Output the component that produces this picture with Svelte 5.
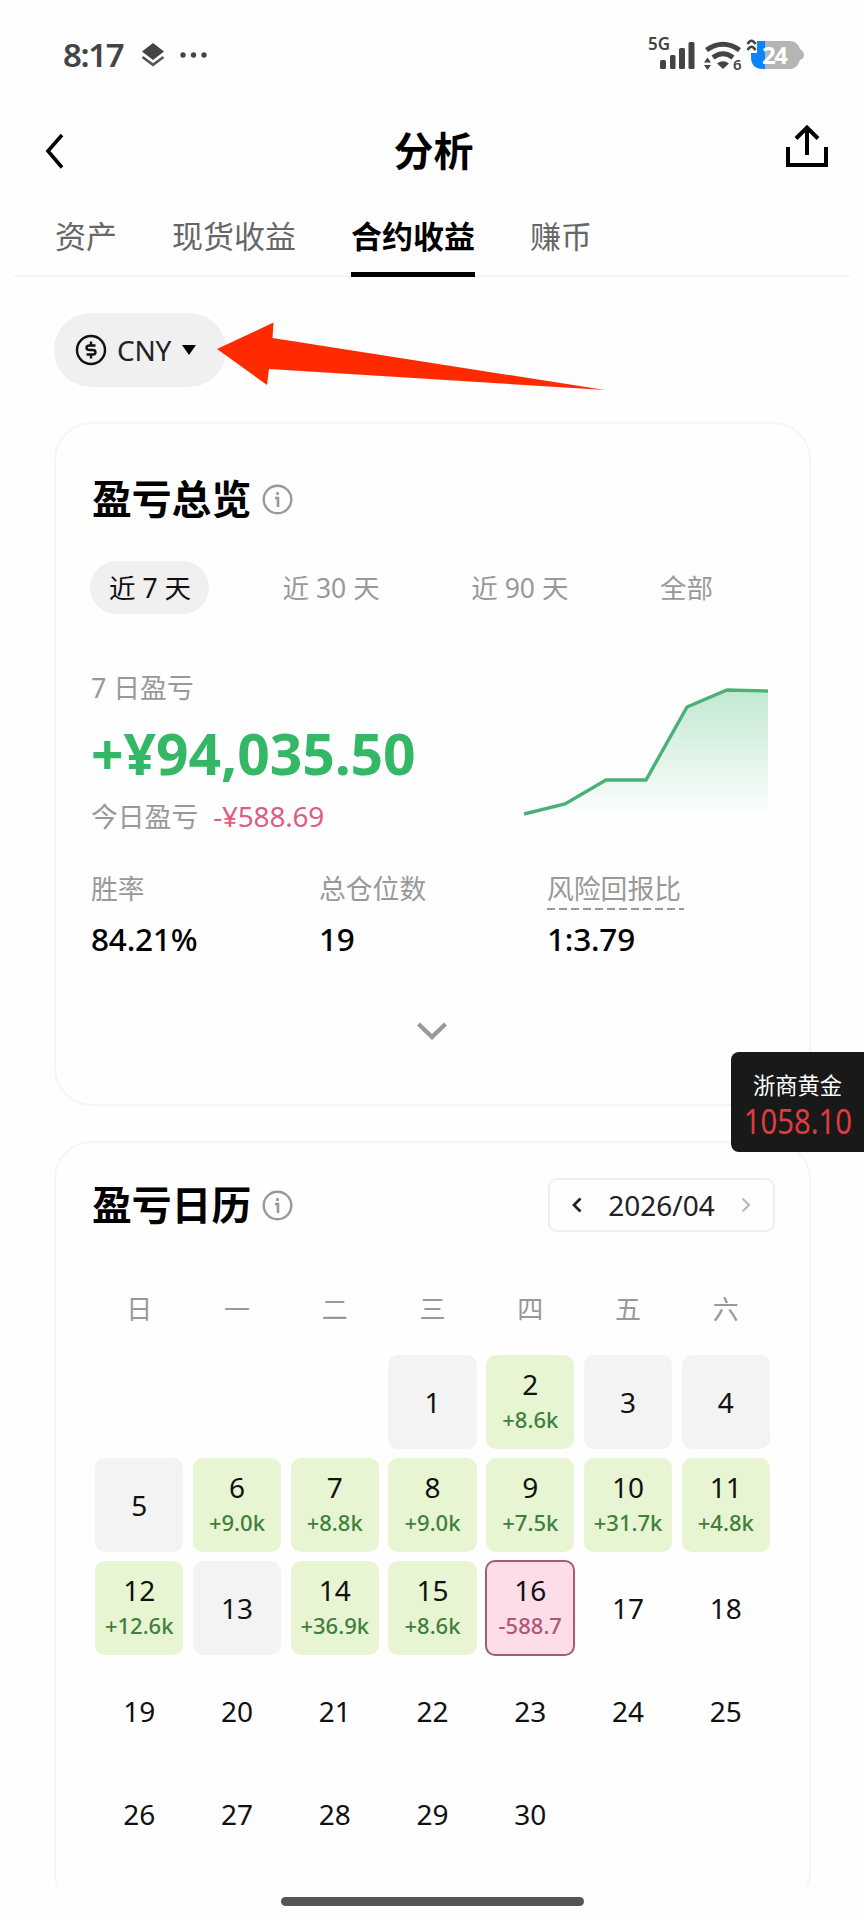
<script>
  let tabs = ['资产', '现货收益', '合约收益', '赚币'];
  let activeTab = '合约收益';

  let ranges = ['近 7 天', '近 30 天', '近 90 天', '全部'];
  let activeRange = '近 7 天';

  let weekdays = ['日', '一', '二', '三', '四', '五', '六'];
  let today = 16;
  let firstWeekday = 3; // April starts on a Wednesday
  let pnl = {
    2: '+8.6k',
    6: '+9.0k',
    7: '+8.8k',
    8: '+9.0k',
    9: '+7.5k',
    10: '+31.7k',
    11: '+4.8k',
    12: '+12.6k',
    14: '+36.9k',
    15: '+8.6k',
    16: '-588.7'
  };

  let blanks = Array.from({ length: firstWeekday });
  let days = Array.from({ length: 30 }, (_, i) => i + 1);

  function dayClass(day) {
    if (day > today) return '';
    if (!pnl[day]) return 'flat';
    return pnl[day].startsWith('-') ? 'loss' : 'gain';
  }
</script>

<div class="screen">
  <div class="status">
    <span class="time">8:17</span>
    <svg class="layers" width="24" height="26" viewBox="0 0 24 26">
      <path d="M12 1 L23 9.5 L12 18 L1 9.5 Z" fill="#444" />
      <path d="M1.5 15 L12 22.8 L22.5 15" fill="none" stroke="#555" stroke-width="2.6" />
    </svg>
    <svg class="dots" width="28" height="6" viewBox="0 0 28 6" fill="#444">
      <circle cx="3" cy="3" r="2.7" /><circle cx="13.5" cy="3" r="2.7" /><circle cx="24" cy="3" r="2.7" />
    </svg>
    <svg class="signals" width="164" height="52" viewBox="-4 -8 164 52" fill="#444">
      <text x="0" y="15" class="net">5G</text>
      <rect x="12" y="25" width="6" height="9" rx="1.5" />
      <rect x="22" y="20" width="5.5" height="14" rx="1.5" />
      <rect x="31" y="13" width="6" height="21" rx="1.5" />
      <rect x="40.5" y="7" width="6" height="27" rx="1.5" />
      <g fill="none" stroke="#444" stroke-width="5">
        <path d="M58.5 15 Q75 3.5 91.500 15" />
        <path d="M65 22.500 Q75 15 85 22.500" />
      </g>
      <path d="M69 28.500 Q75 24 81 28.500 L75 34 Z" />
      <path d="M59.500 22.500 L63 27.500 H56 Z M56 30 H63 L59.500 35 Z" />
      <text x="85" y="35" class="wifi6">6</text>
      <path d="M117 6 H142 Q149 6 152 14 Q156 16 156 20 Q156 24 152 25 Q149 34 142 34 H117 Z" fill="#b5b5b5" />
      <path d="M109 6 H117 V34 H115 Q103 34 103 22 V18 H109 Z" fill="#0a84ff" />
      <path d="M99.500 9 Q103.500 2.500 107.500 9 M99.500 15 Q103.500 8.500 107.500 15" fill="none" stroke="#444" stroke-width="2.600" />
      <text x="114" y="28.500" class="level">24</text>
    </svg>
  </div>

  <header>
    <svg width="20" height="38" viewBox="0 0 20 38">
      <path d="M17 3 L3 19 L17 35.500" fill="none" stroke="#000" stroke-width="3.600" />
    </svg>
    <h1>分析</h1>
    <svg width="42" height="44" viewBox="0 0 42 44" fill="none" stroke="#000" stroke-width="4">
      <path d="M2 23 V41 H40 V23" />
      <path d="M21 31 V3.500 M10 14.500 L21 3.500 L32 14.500" />
    </svg>
  </header>

  <nav>
    {#each tabs as tab}
      <button class="tab" class:active={tab === activeTab} on:click={() => (activeTab = tab)}>{tab}</button>
    {/each}
  </nav>

  <main>
    <div class="currency-row">
      <button class="currency">
        <svg width="32" height="32" viewBox="0 0 32 32" fill="none" stroke="#111" stroke-width="2.4">
          <circle cx="16" cy="16" r="14" />
          <path d="M20.500 11.500 H14.500 Q11.500 11.500 11.500 13.800 Q11.500 16 14.500 16 H17.500 Q20.500 16 20.500 18.200 Q20.500 20.500 17.500 20.500 H11.500 M16 7.500 V11.500 M16 20.500 V24.500" />
        </svg>
        <span>CNY</span>
        <svg width="14" height="10" viewBox="0 0 14 10"><path d="M0 0 H14 L7 10 Z" fill="#000" /></svg>
      </button>
      <svg class="pointer" width="390" height="70" viewBox="0 0 390 70">
        <path d="M0 29 L56.500 2.500 L55.500 18 L388 70 L52 49 L50 65 Z" fill="#ff2a00" />
      </svg>
    </div>

    <section class="card overview">
      <h2>
        盈亏总览
        <svg width="31" height="31" viewBox="0 0 31 31">
          <circle cx="15.500" cy="15.500" r="13.800" fill="none" stroke="#999" stroke-width="2.400" />
          <path d="M13 14 H16 V23 M15.500 8 V11" fill="none" stroke="#999" stroke-width="2.600" />
        </svg>
      </h2>

      <div class="ranges">
        {#each ranges as range}
          <button class="range" class:active={range === activeRange} on:click={() => (activeRange = range)}>{range}</button>
        {/each}
      </div>

      <div class="summary">
        <div>
          <div class="label">7 日盈亏</div>
          <div class="amount">+¥94,035.50</div>
          <div class="label today-pnl">今日盈亏 <span>-¥588.69</span></div>
        </div>
        <svg class="chart" width="246" height="130" viewBox="0 0 246 130">
          <defs>
            <linearGradient id="area" x1="0" y1="0" x2="0" y2="1">
              <stop offset="0" stop-color="#35b56a" stop-opacity="0.300" />
              <stop offset="1" stop-color="#35b56a" stop-opacity="0" />
            </linearGradient>
          </defs>
          <path d="M1 127 L42 117 L83 93 H123 L164 20 L204 3 L245 4 V129 H1 Z" fill="url(#area)" />
          <path d="M1 127 L42 117 L83 93 H123 L164 20 L204 3 L245 4" fill="none" stroke="#48b176" stroke-width="3.400" />
        </svg>
      </div>

      <div class="stats">
        <div>
          <span class="label">胜率</span>
          <strong>84.21%</strong>
        </div>
        <div>
          <span class="label">总仓位数</span>
          <strong>19</strong>
        </div>
        <div>
          <span class="label dashed">风险回报比</span>
          <svg width="137" height="2" viewBox="0 0 137 2"><path d="M0 1 H137" stroke="#999" stroke-width="2" stroke-dasharray="8 4" /></svg>
          <strong>1:3.79</strong>
        </div>
      </div>

      <svg class="expand" width="32" height="20" viewBox="0 0 32 20">
        <path d="M2.500 3 L16 16 L29.500 3" fill="none" stroke="#999" stroke-width="4.400" />
      </svg>
    </section>

    <section class="card calendar">
      <div class="calendar-head">
        <h2>
          盈亏日历
          <svg width="31" height="31" viewBox="0 0 31 31">
            <circle cx="15.500" cy="15.500" r="13.800" fill="none" stroke="#999" stroke-width="2.400" />
            <path d="M13 14 H16 V23 M15.500 8 V11" fill="none" stroke="#999" stroke-width="2.600" />
          </svg>
        </h2>
        <div class="month">
          <svg width="10" height="16" viewBox="0 0 10 16"><path d="M8.500 1.500 L2 8 L8.500 14.500" fill="none" stroke="#222" stroke-width="2.800" /></svg>
          <span>2026/04</span>
          <svg width="10" height="16" viewBox="0 0 10 16"><path d="M1.500 1.500 L8 8 L1.500 14.500" fill="none" stroke="#bbb" stroke-width="2.200" /></svg>
        </div>
      </div>

      <div class="weekdays">
        {#each weekdays as weekday}
          <span>{weekday}</span>
        {/each}
      </div>

      <div class="days">
        {#each blanks as _}
          <div></div>
        {/each}
        {#each days as day}
          <div class="day {dayClass(day)}" class:today={day === today}>
            <span>{day}</span>
            {#if pnl[day]}
              <small>{pnl[day]}</small>
            {/if}
          </div>
        {/each}
      </div>
    </section>
  </main>

  <div class="home"></div>

  <aside>
    <span>浙商黄金</span>
    <b>1058.10</b>
  </aside>
</div>

<style>
  :global(body) {
    margin: 0;
    background: #fefefe;
  }

  .screen {
    position: relative;
    display: flex;
    flex-direction: column;
    width: 864px;
    height: 1920px;
    overflow: hidden;
    box-sizing: border-box;
    background: #fefefe;
    color: #000;
    font-family: 'Noto Sans', 'Noto Sans CJK SC', sans-serif;
  }

  svg {
    display: block;
    flex: none;
  }

  button {
    border: none;
    padding: 0;
    background: none;
    font-family: inherit;
    white-space: nowrap;
  }

  .status {
    display: flex;
    align-items: center;
    height: 111px;
    padding: 0 56px 1px 63px;
    box-sizing: border-box;
    flex: none;
  }

  .time {
    width: 78px;
    color: #444;
    font-size: 33px;
    line-height: 40px;
    font-weight: 600;
    letter-spacing: -1.4px;
  }

  .dots {
    margin-left: 15px;
  }

  .signals {
    margin: 0 0 5px auto;
  }

  .net {
    font-size: 17px;
    font-weight: 600;
  }

  .wifi6 {
    font-size: 15px;
    font-weight: 600;
  }

  .level {
    fill: #fff;
    font-size: 24px;
    font-weight: 700;
    letter-spacing: -1.5px;
  }

  header {
    display: flex;
    align-items: center;
    justify-content: space-between;
    height: 79px;
    padding: 0 36px 0 45px;
    box-sizing: border-box;
    flex: none;
  }

  header svg:last-child {
    margin: -10px 0 0 -22px;
  }

  h1 {
    margin: 0 6px 0 0;
    font-size: 40px;
    line-height: 56px;
    font-weight: 700;
  }

  nav {
    display: flex;
    gap: 55px;
    height: 87px;
    margin: 0 14px;
    padding-left: 41px;
    box-sizing: border-box;
    border-bottom: 2px solid #f5f5f5;
    flex: none;
  }

  .tab {
    height: 87px;
    padding-top: 6px;
    box-sizing: border-box;
    border-bottom: 5px solid transparent;
    color: #666;
    font-size: 31px;
  }

  .tab.active {
    border-color: #000;
    color: #000;
    font-weight: 700;
  }

  main {
    display: flex;
    flex-direction: column;
    height: 1610px;
    padding: 36px 53px 0 54px;
    box-sizing: border-box;
    overflow: hidden;
    flex: none;
  }

  .currency-row {
    position: relative;
    margin-bottom: 35px;
  }

  .currency {
    display: flex;
    align-items: center;
    width: 172px;
    height: 74px;
    padding-left: 21px;
    border-radius: 37px;
    background: #f0f0f0;
    color: #222;
    font-size: 28px;
  }

  .currency span {
    margin: 0 11px 0 10px;
    letter-spacing: -0.3px;
  }

  .pointer {
    position: absolute;
    left: 163px;
    top: 7px;
  }

  .card {
    width: 757px;
    box-sizing: border-box;
    border: 2px solid #f5f5f5;
    border-radius: 38px;
    flex: none;
  }

  .overview {
    height: 684px;
    padding: 47px 36px 0 35px;
    margin-bottom: 35px;
  }

  h2 {
    display: flex;
    align-items: center;
    gap: 11px;
    margin: 0 0 0 1px;
    font-size: 39.8px;
    line-height: 56px;
    font-weight: 700;
  }

  .ranges {
    display: flex;
    justify-content: space-between;
    margin-top: 34px;
    margin-left: -1px;
    padding-right: 42px;
  }

  .range {
    height: 53px;
    padding: 0 18px 2px 19px;
    border-radius: 27px;
    color: #999;
    font-size: 26.5px;
  }

  .range.active {
    background: #f0f0f0;
    color: #111;
  }

  .summary {
    display: flex;
    justify-content: space-between;
    margin-top: 54px;
  }

  .label {
    color: #999;
    font-size: 26.8px;
    line-height: 40px;
  }

  .amount {
    color: #35b866;
    font-size: 57px;
    line-height: 72px;
    margin: 9px 0 7px;
    font-weight: 700;
    letter-spacing: -0.1px;
  }

  .today-pnl span {
    margin-left: 8px;
    color: #dc5f7f;
    font-size: 28px;
    letter-spacing: -0.2px;
  }

  .chart {
    margin: 19px 4px 0 0;
  }

  .stats {
    display: grid;
    grid-template-columns: 228px 228px 1fr;
    margin-top: 32px;
  }

  .stats > div {
    display: flex;
    flex-direction: column;
  }

  .stats .label {
    height: 46px;
  }

  .stats .dashed {
    height: 39px;
  }

  .stats svg {
    margin-bottom: 5px;
  }

  strong {
    font-size: 31.5px;
    line-height: 48px;
    font-weight: 500;
    letter-spacing: -0.2px;
  }

  .expand {
    margin: 58px auto 0;
  }

  .calendar {
    height: 770px;
    padding: 34px 34px 0 35px;
  }

  .calendar-head {
    display: flex;
    justify-content: space-between;
    align-items: center;
  }

  .month {
    display: flex;
    align-items: center;
    justify-content: space-between;
    width: 227px;
    height: 54px;
    padding: 0 22px;
    box-sizing: border-box;
    border: 2px solid #eee;
    border-radius: 9px;
    color: #222;
    font-size: 28px;
  }

  .weekdays,
  .days {
    display: grid;
    grid-template-columns: repeat(7, 1fr);
    column-gap: 9.4px;
    padding: 0 5px 0 4px;
  }

  .weekdays {
    margin-top: 56px;
    color: #999;
    font-size: 26px;
    line-height: 40px;
    text-align: center;
  }

  .days {
    margin-top: 26px;
    grid-auto-rows: 94px;
    row-gap: 9.2px;
  }

  .day {
    display: flex;
    flex-direction: column;
    align-items: center;
    justify-content: center;
    border-radius: 10px;
    padding-bottom: 1px;
    box-sizing: border-box;
    color: #111;
    font-size: 28px;
    line-height: 36px;
  }

  .day small {
    font-size: 22px;
    line-height: 35px;
    font-weight: 500;
  }

  .flat {
    background: #f3f3f3;
  }

  .gain {
    background: #e8f5d3;
  }

  .gain small {
    color: #3f803c;
  }

  .loss {
    background: #fddde8;
  }

  .loss small {
    color: #b05674;
  }

  .today {
    margin: -1px;
    border: 2px solid #a55a76;
  }

  .home {
    width: 303px;
    height: 9px;
    margin: 10px auto 0;
    border-radius: 5px;
    background: #555;
  }

  aside {
    position: absolute;
    right: 0;
    top: 1052px;
    display: flex;
    flex-direction: column;
    align-items: center;
    width: 133px;
    height: 100px;
    padding-top: 18px;
    box-sizing: border-box;
    border-radius: 8px 0 0 8px;
    background: #191919;
    color: #fff;
    font-size: 22.3px;
    line-height: 32px;
  }

  aside b {
    color: #e03c40;
    font-size: 34px;
    line-height: 38px;
    font-weight: 400;
    transform: scaleX(0.86);
  }
</style>
